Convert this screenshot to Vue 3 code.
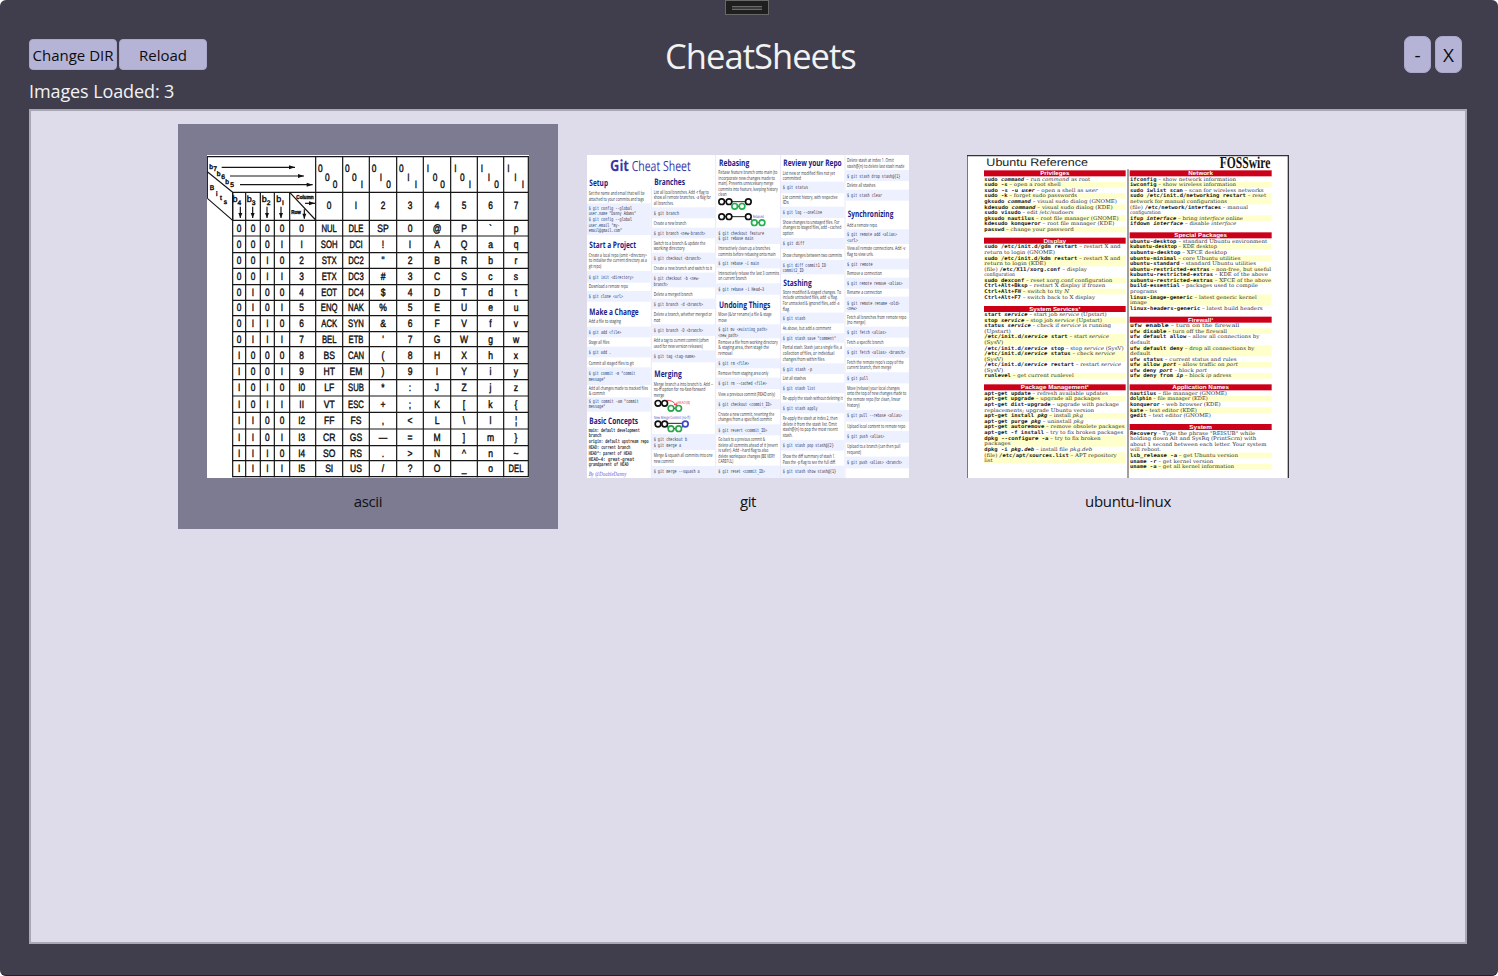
<script setup>
const parse = (src) =>
  src.trim().split('\n').map((l) => l.trim().split('|'))

/* ---------- ASCII chart ---------- */
const colX = [98, 137, 181, 223, 269, 347, 428, 508, 590, 670, 752, 832, 911, 985]
const rowY = [211, 258, 308, 355, 404, 451, 497, 545, 590, 641, 689, 738, 787, 837, 887, 932, 980]
const asciiRows = `
NUL DLE SP 0 @ P \` p
SOH DCI ! I A Q a q
STX DC2 " 2 B R b r
ETX DC3 # 3 C S c s
EOT DC4 $ 4 D T d t
ENQ NAK % 5 E U e u
ACK SYN & 6 F V f v
BEL ETB ' 7 G W g w
BS CAN ( 8 H X h x
HT EM ) 9 I Y i y
LF SUB * : J Z j z
VT ESC + ; K [ k {
FF FS , < L \\ l ¦
CR GS — = M ] m }
SO RS . > N ^ n ~
SI US / ? O _ o DEL`.trim().split('\n').map((r) => r.trim().split(' '))

const bar = (s) => s.replace(/1/g, 'I')
const chart = []
const mid = (i) => (colX[i] + colX[i + 1]) / 2
const put = (x, y, t, k = 0.78) => chart.push({ at: `translate(${x} ${y}) scale(${k} 1)`, t })
asciiRows.forEach((cells, r) => {
  const y = (rowY[r] + rowY[r + 1]) / 2 + 10
  const bits = r.toString(2).padStart(4, '0')
  for (let b = 0; b < 4; b++) put(mid(b), y, bar(bits[b]))
  put(mid(4) - 3, y, bar(String(r)))
  cells.forEach((t, c) => put(mid(5 + c), y, t, t.length === 3 ? 0.72 : 0.8))
})
for (let c = 0; c < 8; c++) {
  const x = colX[5 + c]
  const bits = c.toString(2).padStart(3, '0')
  put(x + 14, 67, bar(bits[0]))
  put(x + 35, 92, bar(bits[1]))
  put(x + 58, 114, bar(bits[2]))
  put(mid(5 + c), 177, c === 1 ? 'I' : String(c))
}
const slant = [
  [33, 56, 'b'], [45, 64, '7'], [56, 79, 'b'], [69, 88, '6'], [81, 102, 'b'], [96, 112, '5'],
  [36, 121, 'B'], [50, 137, 'i'], [63, 149, 't'], [76, 163, 's'],
]
const arrows = [
  [65, 52, 285, 52], [90, 78, 312, 78], [120, 104, 338, 104],
  [121, 170, 121, 204], [158, 170, 158, 204], [201, 170, 201, 204], [243, 170, 243, 204],
  [315, 160, 345, 160], [313, 178, 313, 206],
]
const head = ([x1, y1, x2, y2]) =>
  y1 === y2
    ? `M${x2} ${y2}l-18-6v12z`
    : `M${x2} ${y2}l-6-15h12z`

/* ---------- Git sheet: kind | y | width | text ; b = band | top | bottom ---------- */
const gitCols = [
  { x: 20, l: 15, r: 206, rows: parse(`
h|97|56|Setup
t|130|168|Set the name and email that will be
t|147|166|attached to your commits and tags
b|160|255
c|174|130|$ git config --global
c|191|142|user.name "Danny Adams"
c|208|130|$ git config --global
c|225|93|user.email "my-
c|242|100|email@gmail.com"
h|284|140|Start a Project
t|315|175|Create a local repo (omit <directory>
t|332|175|to initialise the current directory as a
t|349|38|git repo)
b|363|398
c|381|135|$ git init <directory>
t|410|118|Download a remote repo
b|423|455
c|439|103|$ git clone <url>
h|484|148|Make a Change
t|515|97|Add a file to staging
b|530|562
c|546|98|$ git add <file>
t|576|62|Stage all files
b|590|622
c|607|67|$ git add .
t|640|135|Commit all staged files to git
b|652|705
c|670|140|$ git commit -m "commit
c|687|50|message"
t|714|178|Add all changes made to tracked files
t|731|48|& commit
b|742|785
c|754|150|$ git commit -am "commit
c|770|50|message"
h|812|146|Basic Concepts
k|841|153|main: default development
k|857|38|branch
k|875|180|origin: default upstream repo
k|892|125|HEAD: current branch
k|909|130|HEAD^: parent of HEAD
k|927|137|HEAD~4: great-great
k|943|120|grandparent of HEAD
s|973|113|By @DoableDanny`) },
  { x: 215, l: 210, r: 401, rows: parse(`
h|94|92|Branches
t|126|165|List all local branches. Add -r flag to
t|143|172|show all remote branches. -a flag for
t|160|60|all branches.
b|172|205
c|190|76|$ git branch
t|219|98|Create a new branch
b|233|265
c|250|155|$ git branch <new-branch>
t|279|155|Switch to a branch & update the
t|296|93|working directory
b|308|342
c|326|142|$ git checkout <branch>
t|355|175|Create a new branch and switch to it
b|368|412
c|386|138|$ git checkout -b <new-
c|403|42|branch>
t|432|117|Delete a merged branch
b|446|477
c|463|148|$ git branch -d <branch>
t|493|175|Delete a branch, whether merged or
t|510|20|not
b|523|558
c|541|148|$ git branch -D <branch>
t|571|165|Add a tag to current commit (often
t|588|147|used for new version releases)
b|601|637
c|619|125|$ git tag <tag-name>
h|670|82|Merging
t|702|178|Merge branch a into branch b. Add --
t|718|155|no-ff option for no-fast-forward
t|735|32|merge
b|852|900
c|868|100|$ git checkout b
c|885|82|$ git merge a
t|916|177|Merge & squash all commits into one
t|933|60|new commit
b|948|984
c|964|138|$ git merge --squash a`) },
  { x: 409, l: 403, r: 594, rows: parse(`
h|37|91|Rebasing
t|67|177|Rebase feature branch onto main (to
t|84|170|incorporate new changes made to
t|101|165|main). Prevents unnecessary merge
t|118|178|commits into feature, keeping history
t|134|25|clean
b|233|282
c|249|137|$ git checkout feature
c|266|105|$ git rebase main
t|296|155|Interactively clean up a branches
t|313|172|commits before rebasing onto main
b|325|355
c|339|122|$ git rebase -i main
t|370|182|Interactively rebase the last 3 commits
t|386|85|on current branch
b|400|434
c|417|137|$ git rebase -i Head~3
h|465|154|Undoing Things
t|493|160|Move (&/or rename) a file & stage
t|510|26|move
b|523|565
c|538|147|$ git mv <existing_path>
c|555|60|<new_path>
t|576|178|Remove a file from working directory
t|592|152|& staging area, then stage the
t|609|42|removal
b|625|655
c|641|92|$ git rm <file>
t|669|150|Remove from staging area only
b|683|717
c|701|145|$ git rm --cached <file>
t|733|170|View a previous commit (READ only)
b|747|778
c|763|160|$ git checkout <commit_ID>
t|792|168|Create a new commit, reverting the
t|809|160|changes from a specified commit
b|823|856
c|840|147|$ git revert <commit_ID>
t|868|140|Go back to a previous commit &
t|885|178|delete all commits ahead of it (revert
t|902|150|is safer). Add --hard flag to also
t|919|170|delete workspace changes (BE VERY
t|935|45|CAREFUL)
b|947|984
c|965|140|$ git reset <commit_ID>`) },
  { x: 602, l: 597, r: 787, rows: parse(`
h|37|175|Review your Repo
t|69|157|List new or modified files not yet
t|85|55|committed
b|95|130
c|112|76|$ git status
t|142|165|List commit history, with respective
t|158|18|IDs
b|170|204
c|188|118|$ git log --oneline
t|216|170|Show changes to unstaged files. For
t|233|176|changes to staged files, add --cached
t|250|32|option
b|264|297
c|280|65|$ git diff
t|315|178|Show changes between two commits
b|330|373
c|346|130|$ git diff commit1_ID
c|362|63|commit2_ID
h|399|85|Stashing
t|426|175|Store modified & staged changes. To
t|443|165|include untracked files, add -u flag.
t|460|170|For untracked & ignored files, add -a
t|477|22|flag.
b|488|520
c|505|68|$ git stash
t|536|145|As above, but add a comment
b|550|578
c|564|160|$ git stash save "comment"
t|593|178|Partial stash. Stash just a single file, a
t|610|155|collection of files, or individual
t|627|125|changes from within files
b|640|672
c|657|88|$ git stash -p
t|685|70|List all stashes
b|698|730
c|714|98|$ git stash list
t|745|180|Re-apply the stash without deleting it
b|758|790
c|774|105|$ git stash apply
t|805|165|Re-apply the stash at index 2, then
t|822|162|delete it from the stash list. Omit
t|838|165|stash@{n} to pop the most recent
t|855|30|stash.
b|870|902
c|887|153|$ git stash pop stash@{2}
t|920|158|Show the diff summary of stash 1.
t|936|160|Pass the -p flag to see the full diff.
b|947|984
c|964|160|$ git stash show stash@{1}`) },
  { x: 795, l: 791, r: 981, rows: parse(`
t|31|140|Delete stash at index 1. Omit
t|48|172|stash@{n} to delete last stash made
b|60|93
c|79|160|$ git stash drop stash@{1}
t|106|85|Delete all stashes
b|119|152
c|137|105|$ git stash clear
h|190|137|Synchronizing
t|225|90|Add a remote repo
b|238|282
c|254|150|$ git remote add <alias>
c|271|33|<url>
t|295|175|View all remote connections. Add -v
t|312|80|flag to view urls.
b|326|358
c|343|77|$ git remote
t|371|105|Remove a connection
b|383|416
c|400|167|$ git remote remove <alias>
t|428|105|Rename a connection
b|440|487
c|459|158|$ git remote rename <old>
c|476|30|<new>
t|501|178|Fetch all branches from remote repo
t|518|55|(no merge)
b|530|563
c|546|118|$ git fetch <alias>
t|576|110|Fetch a specific branch
b|590|623
c|607|175|$ git fetch <alias> <branch>
t|636|170|Fetch the remote repo's copy of the
t|653|133|current branch, then merge
b|667|700
c|684|63|$ git pull
t|714|158|Move (rebase) your local changes
t|731|178|onto the top of new changes made to
t|748|160|the remote repo (for clean, linear
t|765|38|history)
b|780|815
c|797|165|$ git pull --rebase <alias>
t|829|175|Upload local content to remote repo
b|843|878
c|859|112|$ git push <alias>
t|890|160|Upload to a branch (can then pull
t|907|42|request)
b|920|955
c|938|165|$ git push <alias> <branch>`) },
]
const bands = gitCols.flatMap((c) =>
  c.rows.filter((r) => r[0] === 'b').map((r) => ({ x: c.l, w: c.r - c.l, y: +r[1], h: r[2] - r[1] })))
const gitLines = gitCols.flatMap((c) =>
  c.rows.filter((r) => r[0] !== 'b').map(([k, y, w, t]) => ({
    k, t, w, x: k === 'h' ? c.x + 2 : c.x, y: +y + (k === 'h' ? 10 : 5),
  })))
const rings = [
  [228, 760, '#111'], [248, 760, '#111'], [267, 775, '#22a845'], [290, 775, '#22a845'],
  [228, 822, '#111'], [248, 822, '#111'], [267, 836, '#22a845'], [290, 836, '#22a845'], [310, 822, '#3f48cc'],
  [419, 155, '#111'], [441, 155, '#111'], [458, 169, '#22b14c'], [480, 169, '#22b14c'], [499, 155, '#111'],
  [419, 200, '#111'], [441, 200, '#111'], [499, 200, '#111'], [517, 218, '#22b14c'], [540, 218, '#22b14c'],
]
const links = [
  'M237 760h3M276 775h5', 'M237 822h3M257 820h44M276 836h5M254 829l6 4M299 832l5-3',
  'M428 155h5M450 155h40M467 169h5', 'M428 200h5M450 200h40M526 218h5M506 207l5 5',
]

/* ---------- Ubuntu sheet: kind | y | end x | markup ; *mono* ^mono italic^ ~italic~ ---------- */
const ubuntuCols = [
  { x: 73, l: 72, r: 497, rows: parse(`
h|70|88|Privileges
n|87|391|*sudo *^command^ – run ~command~ as root
y|104|302|*sudo -s* – open a root shell
n|121|413|*sudo -s -u *^user^ – open a shell as ~user~
y|137|351|*sudo -k* – forget sudo passwords
n|154|471|*gksudo *^command^ – visual sudo dialog (GNOME)
y|171|458|*kdesudo *^command^ – visual sudo dialog (KDE)
n|188|341|*sudo visudo* – edit /etc/sudoers
y|204|476|*gksudo nautilus* – root file manager (GNOME)
n|221|463|*kdesudo konqueror* – root file manager (KDE)
y|238|341|*passwd* – change your password
h|272|68|Display
n|290|482|*sudo /etc/init.d/gdm restart* – restart X and
n|307|285|return to login (GNOME)
y|324|481|*sudo /etc/init.d/kdm restart* – restart X and
y|340|258|return to login (KDE)
n|357|381|(file) */etc/X11/xorg.conf* – display
n|374|165|configuration
y|391|457|*sudo dexconf* – reset xorg.conf configuration
n|407|436|*Ctrl+Alt+Bksp* – restart X display if frozen
y|424|327|*Ctrl+Alt+F*^N^ – switch to tty ~N~
n|441|405|*Ctrl+Alt+F7* – switch back to X display
h|477|154|System Services¹
n|493|440|*start *^service^ – start job ~service~ (Upstart)
y|510|426|*stop *^service^ – stop job ~service~ (Upstart)
n|527|453|*status *^service^ – check if ~service~ is running
n|543|152|(Upstart)
y|560|447|*/etc/init.d/*^service^* start* – start ~service~
y|577|130|(SysV)
n|594|491|*/etc/init.d/*^service^* stop* – stop ~service~ (SysV)
y|610|465|*/etc/init.d/*^service^* status* – check ~service~
y|627|130|(SysV)
n|644|483|*/etc/init.d/*^service^* restart* – restart ~service~
n|661|130|(SysV)
y|677|341|*runlevel* – get current runlevel
h|712|204|Package Management¹
n|730|444|*apt-get update* – refresh available updates
y|746|420|*apt-get upgrade* – upgrade all packages
n|763|477|*apt-get dist-upgrade* – upgrade with package
n|780|402|replacements; upgrade Ubuntu version
y|797|369|*apt-get install *^pkg^ – install ~pkg~
n|813|371|*apt-get purge *^pkg^ – uninstall ~pkg~
y|830|494|*apt-get autoremove* – remove obsolete packages
n|847|490|*apt-get -f install* – try to fix broken packages
y|864|422|*dpkg --configure -a* – try to fix broken
y|881|152|packages
n|897|397|*dpkg -i *^pkg.deb^ – install file ~pkg.deb~
y|915|470|(file) */etc/apt/sources.list* – APT repository
y|931|98|list`) },
  { x: 510, l: 509, r: 935, rows: parse(`
h|70|74|Network
n|87|828|*ifconfig* – show network information
y|104|828|*iwconfig* – show wireless information
n|121|911|*sudo iwlist scan* – scan for wireless networks
y|137|919|*sudo /etc/init.d/networking restart* – reset
y|154|801|network for manual configurations
n|171|864|(file) */etc/network/interfaces* – manual
n|188|602|configuration
y|204|849|*ifup *^interface^ – bring ~interface~ online
n|221|829|*ifdown *^interface^ – disable ~interface~
h|256|158|Special Packages
n|273|922|*ubuntu-desktop* – standard Ubuntu environment
y|290|771|*kubuntu-desktop* – KDE desktop
n|307|801|*xubuntu-desktop* – XFCE desktop
y|324|842|*ubuntu-minimal* – core Ubuntu utilities
n|340|888|*ubuntu-standard* – standard Ubuntu utilities
y|357|933|*ubuntu-restricted-extras* – non-free, but useful
n|374|924|*kubuntu-restricted-extras* – KDE of the above
y|391|934|*xubuntu-restricted-extras* – XFCE of the above
n|407|894|*build-essential* – packages used to compile
n|424|591|programs
y|441|890|*linux-image-generic* – latest generic kernel
y|458|561|image
n|474|908|*linux-headers-generic* – latest build headers
h|509|76|Firewall¹
n|527|838|*ufw enable* – turn on the firewall
y|543|801|*ufw disable* – turn off the firewall
n|560|898|*ufw default allow* – allow all connections by
n|577|571|default
y|594|883|*ufw default deny* – drop all connections by
y|610|571|default
n|627|830|*ufw status* – current status and rules
y|644|834|*ufw allow *^port^ – allow traffic on ~port~
n|661|741|*ufw deny *^port^ – block ~port~
y|677|814|*ufw deny from *^ip^ – block ~ip~ adress
h|712|170|Application Names
n|730|801|*nautilus* – file manager (GNOME)
y|746|743|*dolphin* – file manager (KDE)
n|763|782|*konqueror* – web browser (KDE)
y|780|711|*kate* – text editor (KDE)
n|797|753|*gedit* – text editor (GNOME)
h|831|68|System
n|849|886|*Recovery* - Type the phrase "REISUB" while
n|866|889|holding down Alt and SysRq (PrintScrn) with
n|882|919|about 1 second between each letter. Your system
n|899|603|will reboot.
y|916|834|*lsb_release -a* – get Ubuntu version
n|933|760|*uname -r* – get kernel version
y|950|822|*uname -a* – get all kernel information`) },
]
const stripes = ubuntuCols.flatMap((c) =>
  c.rows.filter((r) => r[0] !== 'n').map((r) => {
    const h = r[0] === 'h'
    return { x: c.l, w: c.r - c.l, y: r[1] - (h ? 9 : 8), h: h ? 18 : 17, fill: h ? '#cc0018' : '#ffffcb' }
  }))
const classOf = { '*': 'mb', '^': 'mi', '~': 'si' }
const spans = (s) =>
  (s.match(/\*[^*]+\*|\^[^^]+\^|~[^~]+~|[^*^~]+/g) || []).map((p) =>
    classOf[p[0]] ? { c: classOf[p[0]], t: p.slice(1, -1) } : { c: 'sr', t: p })
</script>

<template>
  <div class="window">
    <div class="grip"><i></i></div>
    <header class="top">
      <div class="actions">
        <button class="btn">Change DIR</button>
        <button class="btn">Reload</button>
      </div>
      <h1>CheatSheets</h1>
      <div class="controls">
        <button class="ctl">-</button>
        <button class="ctl">X</button>
      </div>
    </header>
    <p class="status">Images Loaded: 3</p>
    <main class="list">
      <figure class="item selected">
        <svg class="thumb ascii" viewBox="21 15 966 969" preserveAspectRatio="none">
          <rect x="21" y="15" width="966" height="969" fill="#fff" />
          <g fill="none" stroke="#161616" stroke-width="3.6">
            <path d="M22 20H985M98 127H985M269 127L347 210M22 65L98 127M22 145L98 211M22 18V145M98 127V211" />
            <path v-for="(x, i) in colX" :key="x" :d="`M${x} ${i < 5 ? 127 : 18}V982`" />
            <path v-for="y in rowY" :key="y" :d="`M98 ${y}H985`" />
            <path v-for="(a, i) in arrows" :key="i" :d="`M${a[0]} ${a[1]}L${a[2]} ${a[3]}`" />
          </g>
          <path v-for="(a, i) in arrows" :key="'h' + i" :d="head(a)" fill="#111" />
          <text v-for="(c, i) in chart" :key="'t' + i" class="cell" :transform="c.at">{{ c.t }}</text>
          <text v-for="(s, i) in slant" :key="'s' + i" class="small" :x="s[0]" :y="s[1]">{{ s[2] }}</text>
          <template v-for="(x, i) in [105, 148, 193, 236]" :key="'b' + i">
            <text class="cell sub" :x="x" y="156">b</text>
            <text class="small" :x="x + 13" y="164">{{ ['4', '3', '2', 'I'][i] }}</text>
          </template>
          <text class="tiny" x="315" y="147" textLength="52" lengthAdjust="spacingAndGlyphs">Column</text>
          <text class="tiny" x="288" y="193" textLength="29" lengthAdjust="spacingAndGlyphs">Row</text>
        </svg>
        <figcaption>ascii</figcaption>
      </figure>

      <figure class="item">
        <svg class="thumb git" viewBox="15 15 966 969" preserveAspectRatio="none">
          <rect x="15" y="15" width="966" height="969" fill="#fff" />
          <path d="M208 112V984M401 15V984M595.500 15V984M789 15V984" stroke="#e9e9fa" stroke-width="3" />
          <rect v-for="(b, i) in bands" :key="'b' + i" :x="b.x" :y="b.y" :width="b.w" :height="b.h" fill="#ecf0ff" />
          <text class="logo" x="84" y="62" textLength="57" lengthAdjust="spacingAndGlyphs">Git</text>
          <text class="logo thin" x="149" y="62" textLength="177" lengthAdjust="spacingAndGlyphs">Cheat Sheet</text>
          <text v-for="(l, i) in gitLines" :key="'l' + i" :class="'g-' + l.k" :x="l.x" :y="l.y"
            :textLength="l.w" lengthAdjust="spacingAndGlyphs">{{ l.t }}</text>
          <path v-for="d in links" :key="d" :d="d" stroke="#222" stroke-width="3" fill="none" />
          <circle v-for="(c, i) in rings" :key="'r' + i" :cx="c[0]" :cy="c[1]" r="8.500" :stroke="c[2]" stroke-width="5" fill="#fff" />
          <path d="M254 751Q272 750 283 765M276 763l8 3l1-9" stroke="#ed1c24" stroke-width="2.500" fill="none" />
          <text class="note" x="287" y="761" textLength="37" lengthAdjust="spacingAndGlyphs" fill="#ed1c24">HEAD (B)</text>
          <text class="note" x="216" y="807" textLength="108" lengthAdjust="spacingAndGlyphs" fill="#3f48cc">New Merge Commit (no-ff)</text>
          <text class="note" x="512" y="203" textLength="33" lengthAdjust="spacingAndGlyphs" fill="#3f48cc">Rebased</text>
        </svg>
        <figcaption>git</figcaption>
      </figure>

      <figure class="item">
        <svg class="thumb ubuntu" viewBox="21 15 966 969" preserveAspectRatio="none">
          <rect x="21" y="15" width="966" height="969" fill="#fff" />
          <path d="M22.500 15V984" stroke="#77777f" stroke-width="3" />
          <path d="M21 16.500H987M985 15V984" stroke="#33333b" stroke-width="4" />
          <path d="M504 58V984" stroke="#8c8c8c" stroke-width="5" />
          <rect v-for="(s, i) in stripes" :key="'s' + i" :x="s.x" :y="s.y" :width="s.w" :height="s.h" :fill="s.fill" />
          <text class="u-title" x="79" y="48" textLength="305" lengthAdjust="spacingAndGlyphs">Ubuntu Reference</text>
          <text class="u-brand" x="779" y="53" textLength="152" lengthAdjust="spacingAndGlyphs">FOSSwire</text>
          <template v-for="col in ubuntuCols" :key="col.x">
            <template v-for="(r, i) in col.rows" :key="i">
              <text v-if="r[0] === 'h'" class="u-h" :x="(col.l + col.r) / 2" :y="+r[1] + 6" :textLength="r[2]" lengthAdjust="spacingAndGlyphs">{{ r[3] }}</text>
              <text v-else class="u-t" :x="col.x" :y="+r[1] + 5" :textLength="r[2] - col.x" lengthAdjust="spacingAndGlyphs"><tspan v-for="(s, k) in spans(r[3])" :key="k" :class="s.c">{{ s.t }}</tspan></text>
            </template>
          </template>
        </svg>
        <figcaption>ubuntu-linux</figcaption>
      </figure>
    </main>
  </div>
</template>

<style>
html, body { margin: 0; background: #fff; overflow: hidden; }
</style>

<style scoped>
.window {
  position: relative;
  box-sizing: border-box;
  width: 1498px;
  height: 976px;
  padding: 36px 31px 31px 29px;
  display: flex;
  flex-direction: column;
  background: #403e4d;
  border-bottom: 1px solid #2a1c2c;
  border-radius: 6px;
  font-family: "Open Sans", "Noto Sans", sans-serif;
  color: #f2f2f2;
}
.grip {
  position: absolute;
  top: 0;
  left: 725px;
  box-sizing: border-box;
  width: 44px;
  height: 15px;
  border: 1px solid #686868;
  background: #1f1f1f;
  display: flex;
  justify-content: center;
  padding-top: 5px;
}
.grip i {
  box-sizing: border-box;
  width: 30px;
  height: 4px;
  border: solid #6a6a6a;
  border-width: 1px 0;
  background: #3b3b3b;
}
.top {
  display: grid;
  grid-template-columns: 636px 1fr 60px;
  align-items: start;
  height: 44px;
  padding-right: 5px;
}
.actions { display: flex; gap: 2px; padding-top: 3px; }
button {
  padding: 0;
  border: 1px solid #aaa8cb;
  background: #b5b4d6;
  color: #0c0c10;
  font-family: inherit;
  white-space: nowrap;
}
.btn {
  width: 88px;
  height: 31px;
  border-radius: 4px;
  font-size: 15px;
  line-height: 30px;
  letter-spacing: 0;
}
h1 {
  margin: 0;
  font-size: 34.5px;
  font-weight: 400;
  line-height: 40px;
  letter-spacing: -0.95px;
}
.controls { display: flex; gap: 5px; justify-content: flex-end; }
.ctl {
  width: 27px;
  height: 37px;
  border-radius: 7px;
  font-size: 19px;
  line-height: 37px;
}
.controls { gap: 4px; }
.status {
  margin: 0;
  height: 29px;
  font-size: 18px;
  line-height: 22px;
  letter-spacing: -0.1px;
}
.list {
  flex: 1;
  box-sizing: border-box;
  border: 2px solid #a9a8b4;
  background: #dedcea;
  display: flex;
  justify-content: center;
  align-items: flex-start;
  padding-top: 13px;
}
.item {
  box-sizing: border-box;
  width: 380px;
  height: 405px;
  margin: 0;
  padding: 31px 29px 0;
}
.selected { background: #7c7b91; }
.thumb { display: block; width: 322px; height: 323px; text-rendering: geometricPrecision; }
figcaption {
  margin-top: 12px;
  text-align: center;
  color: #111;
  font-size: 15px;
  line-height: 22px;
  letter-spacing: -0.35px;
}

.ascii text { font-family: "Liberation Sans", sans-serif; text-anchor: middle; fill: #111; stroke: #111; stroke-width: 1.3; }
.ascii .cell { font-size: 32px; }
.ascii .cell.sub { font-size: 27px; }
.ascii .small { font-size: 20px; }
.ascii .tiny { font-size: 17px; font-weight: 700; }

.git text { white-space: pre; }
.logo { font: 700 46px "Open Sans", sans-serif; fill: #3a35a8; }
.logo.thin { font-weight: 400; font-size: 42px; }
.g-h { font: 700 27px "Open Sans", sans-serif; fill: #201d88; }
.g-t { font: 400 16.5px "Open Sans", sans-serif; fill: #34343f; }
.g-c { font: 400 15.5px "DejaVu Sans Mono", monospace; fill: #33354a; }
.g-k { font: 400 15.5px "DejaVu Sans Mono", monospace; fill: #1b1b26; stroke: #1b1b26; stroke-width: 0.4; }
.g-s { font: italic 400 19px "Liberation Serif", serif; fill: #6a66e0; }
.note { font: 400 13px "Open Sans", sans-serif; }

.ubuntu text { white-space: pre; }
.u-title { font: 400 33px "Liberation Sans", sans-serif; fill: #1a1a1a; }
.u-brand { font: 700 50px "Liberation Serif", serif; fill: #111; }
.u-h { font: 700 17px "Liberation Sans", sans-serif; fill: #fff; text-anchor: middle; }
.u-t { font-size: 15px; }
.sr { font-family: "DejaVu Serif", serif; fill: #333; }
.si { font-family: "DejaVu Serif", serif; font-style: italic; fill: #333; }
.mb { font-family: "DejaVu Sans Mono", monospace; font-weight: 700; fill: #151515; }
.mi { font-family: "DejaVu Sans Mono", monospace; font-weight: 700; font-style: italic; fill: #151515; }
</style>
